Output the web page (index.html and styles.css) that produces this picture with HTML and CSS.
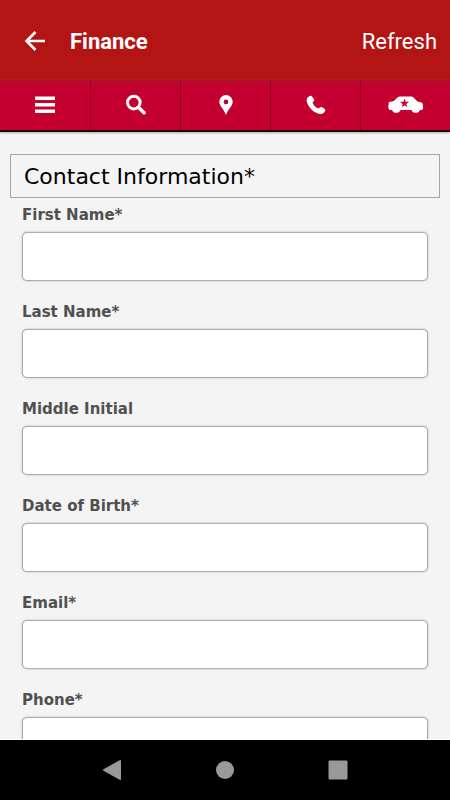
FILE: index.html
```html
<!DOCTYPE html>
<html lang="en">
<head>
<meta charset="utf-8">
<meta name="viewport" content="width=device-width, initial-scale=1">
<title>Finance</title>
<link rel="stylesheet" href="styles.css">
</head>
<body>
<header class="app-bar">
  <button class="back" type="button" aria-label="Back">
    <svg width="22" height="22" viewBox="0 0 22 22"><path d="M21 11H3M11.500 2L2.500 11l9 9" fill="none" stroke="currentColor" stroke-width="2.600"/></svg>
  </button>
  <h1 class="title">Finance</h1>
  <button class="refresh" type="button">Refresh</button>
</header>
<nav class="tabs">
  <a class="tab" href="#menu" aria-label="Menu">
    <svg width="20" height="18" viewBox="0 0 20 18" fill="currentColor"><path d="M0 .5h20V4H0zM0 7h20v3.500H0zM0 13.500h20V17H0z"/></svg>
  </a>
  <a class="tab" href="#search" aria-label="Search">
    <svg width="22" height="22" viewBox="0 0 22 22" fill="none" stroke="currentColor"><circle cx="8.800" cy="8.600" r="6.300" stroke-width="3"/><path d="M13.500 13.300l5.500 5.500" stroke-width="3.600" stroke-linecap="round"/></svg>
  </a>
  <a class="tab" href="#location" aria-label="Location">
    <svg width="14" height="20" viewBox="0 0 14 20" fill="currentColor"><path fill-rule="evenodd" d="M7 0a6.700 6.700 0 0 0-6.700 6.700C.3 11 5 14 7 20c2-6 6.700-9 6.700-13.300A6.700 6.700 0 0 0 7 0zm0 4.500a2.400 2.400 0 1 1 0 4.800 2.400 2.400 0 0 1 0-4.800z"/></svg>
  </a>
  <a class="tab" href="#call" aria-label="Call">
    <svg width="20" height="20" viewBox="0 0 20 20" fill="currentColor"><path d="M2.500 1.800C3.600.7 5 .3 5.800 1.200l2.200 3c.6 1 .3 1.600-.7 2.500-.8.7-.7 1.300-.2 2.200 1 1.700 2.400 3 4.200 4.100.9.500 1.500.4 2.200-.3.800-.9 1.700-1 2.700-.4l2.500 1.700c1.100.8.8 2-.4 3.300-1.400 1.500-3.300 2.200-5.600 1.500C7.200 17.200 2.300 12.200.8 6.800.3 4.800 1 3.200 2.500 1.800z"/></svg>
  </a>
  <a class="tab" href="#vehicles" aria-label="Vehicles">
    <svg width="36" height="18" viewBox="0 0 36 18" fill="currentColor"><path fill-rule="evenodd" d="M.8 6L5.500 5.300 9.500 1.500Q10.500.5 12 .5h11q1.500 0 2.500 1l4 4 4 1q1 .4 1.200 1.500l.5 4-1 2H32a4.600 4.600 0 0 1-8.500 0h-11a4.600 4.600 0 0 1-8.500 0H1.500L.3 12zM16.500 2.500l-1.100 3.200-3.400.1 2.700 2.100-1 3.300 2.800-1.900 2.800 1.900-1-3.300L21 5.800l-3.400-.1z"/></svg>
  </a>
</nav>
<main class="content">
  <form class="form">
    <h2 class="section">Contact Information*</h2>
    <div class="field"><label for="first">First Name*</label><input id="first" type="text"></div>
    <div class="field"><label for="last">Last Name*</label><input id="last" type="text"></div>
    <div class="field"><label for="middle">Middle Initial</label><input id="middle" type="text"></div>
    <div class="field"><label for="birth">Date of Birth*</label><input id="birth" type="text"></div>
    <div class="field"><label for="email">Email*</label><input id="email" type="email"></div>
    <div class="field"><label for="phone">Phone*</label><input id="phone" type="tel"></div>
  </form>
</main>
<footer class="system-bar">
  <button type="button" aria-label="System back"><svg width="20" height="20" viewBox="0 0 20 20"><path d="M1.500 9.300L17.600.2q1.400-.6 1.400.8v18q0 1.400-1.400.8L1.500 10.700q-1-.7 0-1.400z" fill="currentColor"/></svg></button>
  <button type="button" aria-label="Home"><svg width="20" height="20" viewBox="0 0 20 20"><circle cx="10" cy="10" r="9" fill="currentColor"/></svg></button>
  <button type="button" aria-label="Recent apps"><svg width="20" height="20" viewBox="0 0 20 20"><rect x=".5" y=".5" width="19" height="19" rx="1" fill="currentColor"/></svg></button>
</footer>
</body>
</html>
```
FILE: styles.css
```css
* {
  box-sizing: border-box;
}

body {
  margin: 0;
  height: 100vh;
  display: flex;
  flex-direction: column;
  background: #f4f4f4;
  font-family: "DejaVu Sans", sans-serif;
}

button {
  padding: 0;
  border: 0;
  background: none;
  color: inherit;
  font: inherit;
}

svg {
  display: block;
}

.app-bar {
  flex: none;
  display: flex;
  align-items: center;
  padding: 28px 13px 24px 24px;
  background: #b31515;
  color: #fff;
  font: 22px/28px Roboto, sans-serif;
}

.back {
  padding-bottom: 3px;
}

.title {
  flex: 1;
  margin: 0 0 0 24px;
  font-size: 22px;
  font-weight: 700;
}

.tabs {
  flex: none;
  display: grid;
  grid-template-columns: repeat(5, 1fr);
  background: linear-gradient(#b0102c, #c3002f 5px);
  border-bottom: 2px solid #24000a;
  box-shadow: 0 1px 2px #aaa;
}

.tab {
  height: 50px;
  display: flex;
  align-items: center;
  justify-content: center;
  color: #fff;
}

.tab + .tab {
  border-left: 1px solid #8d0525;
}

.content {
  flex: 1;
  min-height: 0;
  overflow: hidden;
  padding: 22px 10px 0;
  border-bottom: 1px solid #fff;
}

.section {
  margin: 0 0 6px;
  padding: 9px 13px 7px;
  border: 1px solid #a5a5a5;
  color: #000;
  font-size: 22px;
  line-height: 26px;
  font-weight: 400;
}

.field {
  display: flex;
  flex-direction: column;
  gap: 6px;
  margin: 0 12px 20px;
}

.field label {
  color: #505050;
  font-size: 15px;
  line-height: 22px;
  font-weight: 700;
}

.field input {
  width: 100%;
  height: 49px;
  padding: 0 12px;
  border: 1px solid #adadad;
  border-radius: 5px;
  background: #fff;
  box-shadow: 0 0 2px #aaa;
  font: inherit;
}

.system-bar {
  flex: none;
  height: 60px;
  display: flex;
  align-items: center;
  justify-content: center;
  gap: 93px;
  background: #000;
  color: #999;
}
```
